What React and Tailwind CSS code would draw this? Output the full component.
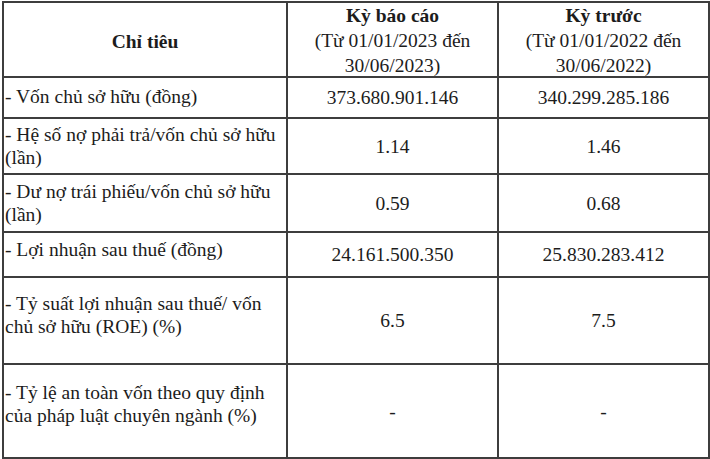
const rows = [
    { label: ['- Vốn chủ sở hữu (đồng)'], a: '373.680.901.146', b: '340.299.285.186', h: 'h-[41px]', pt: 'pt-[7px]' },
    { label: ['- Hệ số nợ phải trả/vốn chủ sở hữu', '(lần)'], a: '1.14', b: '1.46', h: 'h-[56px]', pt: 'pt-[4px]' },
    { label: ['- Dư nợ trái phiếu/vốn chủ sở hữu', '(lần)'], a: '0.59', b: '0.68', h: 'h-[58px]', pt: 'pt-[5px]' },
    { label: ['- Lợi nhuận sau thuế (đồng)'], a: '24.161.500.350', b: '25.830.283.412', h: 'h-[45px]', pt: 'pt-[5px]' },
    { label: ['- Tỷ suất lợi nhuận sau thuế/ vốn', 'chủ sở hữu (ROE) (%)'], a: '6.5', b: '7.5', h: 'h-[87px]', pt: 'pt-[14px]' },
    { label: ['- Tỷ lệ an toàn vốn theo quy định', 'của pháp luật chuyên ngành (%)'], a: '-', b: '-', h: 'h-[94px]', pt: 'pt-[16px]' },
];

export default function App() {
    return (
        <div className="w-[710px] h-[459px] bg-white overflow-hidden pl-[2px] pt-[1px] text-[#1c1c1c] text-[19.5px] leading-[23px] font-['Liberation_Serif','Times_New_Roman',serif]">
            <div className="grid grid-cols-[284px_211px_211px] border-l-2 border-t-2 border-[#3d3d3d]">
                {/* header */}
                <div className="h-[75px] flex items-center justify-center pt-[4px] border-r-2 border-b-2 border-[#3d3d3d] font-bold">
                    Chỉ tiêu
                </div>
                <div className="h-[75px] flex flex-col items-center justify-center pt-[2px] leading-[25px] border-r-2 border-b-2 border-[#3d3d3d]">
                    <span className="font-bold">Kỳ báo cáo</span>
                    <span>(Từ 01/01/2023 đến</span>
                    <span>30/06/2023)</span>
                </div>
                <div className="h-[75px] flex flex-col items-center justify-center pt-[2px] leading-[25px] border-r-2 border-b-2 border-[#3d3d3d]">
                    <span className="font-bold">Kỳ trước</span>
                    <span>(Từ 01/01/2022 đến</span>
                    <span>30/06/2022)</span>
                </div>

                {rows.map((r, i) => (
                    <Row key={i} {...r} />
                ))}
            </div>
        </div>
    );
}

function Row({ label, a, b, h, pt }) {
    return (
        <>
            <div className={`${h} ${pt} pl-[1px] whitespace-nowrap border-r-2 border-b-2 border-[#3d3d3d]`}>
                {label.map((l, i) => (
                    <div key={i}>{l}</div>
                ))}
            </div>
            <div className={`${h} flex items-center justify-center border-r-2 border-b-2 border-[#3d3d3d]`}>{a}</div>
            <div className={`${h} flex items-center justify-center border-r-2 border-b-2 border-[#3d3d3d]`}>{b}</div>
        </>
    );
}
